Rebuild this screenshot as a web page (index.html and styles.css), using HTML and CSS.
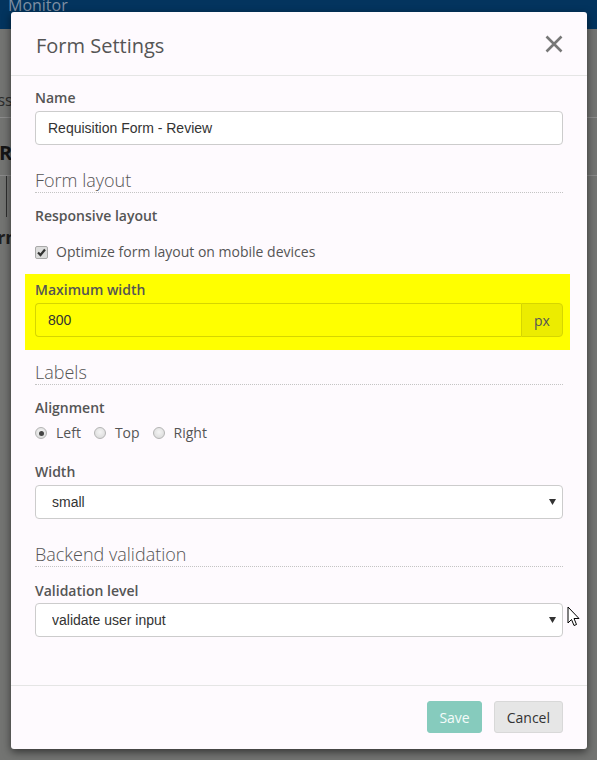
FILE: index.html
```html
<!DOCTYPE html>
<html lang="en">

<head>
    <meta charset="UTF-8" />
    <meta name="viewport" content="width=device-width, initial-scale=1.0" />
    <title>Form Settings</title>
    <link rel="stylesheet" href="styles.css">
</head>

<body>

    <div class="page">
        <div class="topbar"><span class="brand">Monitor</span></div>
        <div class="crumbs"><span>Process</span></div>
        <h2 class="page-title">Requisitions</h2>
        <div class="grid">
            <div class="grid-cell"></div>
        </div>
        <div class="grid-label">Return</div>
    </div>

    <div class="modal">
        <div class="modal-header">
            <h1 class="modal-title">Form Settings</h1>
            <button class="close" aria-label="Close">
                <svg width="18" height="18" viewBox="0 0 18 18">
                    <path d="M1.5 1.5 L16.5 16.5 M16.5 1.5 L1.5 16.5" stroke="#777" stroke-width="2.6" fill="none" />
                </svg>
            </button>
        </div>

        <div class="modal-body">
            <label class="field-label">Name</label>
            <input class="text-input" type="text" value="Requisition Form - Review">

            <h3 class="section-title">Form layout</h3>

            <label class="field-label after-title">Responsive layout</label>
            <label class="check-row">
                <span class="checkbox">
                    <svg width="11" height="11" viewBox="0 0 11 11">
                        <path d="M2 5.5 L4.5 8 L9 2.5" stroke="#333" stroke-width="2.2" fill="none" />
                    </svg>
                </span>
                Optimize form layout on mobile devices
            </label>

            <div class="highlight">
                <label class="field-label">Maximum width</label>
                <div class="input-group">
                    <input class="text-input" type="text" value="800">
                    <span class="addon">px</span>
                </div>
            </div>

            <h3 class="section-title after-highlight">Labels</h3>

            <label class="field-label after-title">Alignment</label>
            <div class="radio-row">
                <label class="radio"><span class="radio-dot checked"></span>Left</label>
                <label class="radio"><span class="radio-dot"></span>Top</label>
                <label class="radio"><span class="radio-dot"></span>Right</label>
            </div>

            <label class="field-label after-radios">Width</label>
            <div class="select">
                <select>
                    <option>small</option>
                    <option>medium</option>
                    <option>large</option>
                </select>
                <svg class="caret" width="7" height="6" viewBox="0 0 7 6">
                    <polygon points="0,0 7,0 3.5,6" fill="#333" />
                </svg>
            </div>

            <h3 class="section-title">Backend validation</h3>

            <label class="field-label after-title level">Validation level</label>
            <div class="select">
                <select>
                    <option>validate user input</option>
                    <option>none</option>
                </select>
                <svg class="caret" width="7" height="6" viewBox="0 0 7 6">
                    <polygon points="0,0 7,0 3.5,6" fill="#333" />
                </svg>
            </div>
        </div>

        <div class="modal-footer">
            <button class="btn btn-save" disabled>Save</button>
            <button class="btn btn-cancel">Cancel</button>
        </div>
    </div>

    <svg class="cursor" width="14" height="22" viewBox="0 0 14 22">
        <path d="M1 1 L1 17 L4.5 13.5 L7 19.5 L9.5 18.5 L7 12.5 L12 12.5 Z" fill="#fff" stroke="#000" stroke-width="1" />
    </svg>

</body>

</html>
```

FILE: styles.css
```css
* {
    box-sizing: border-box;
}

body {
    margin: 0;
    height: 760px;
    overflow: hidden;
    position: relative;
    font-family: "Open Sans", sans-serif;
    background: #737472;
}

/* dimmed page behind the dialog */
.topbar {
    height: 29px;
    background: #03345e;
    overflow: hidden;
    padding-left: 8px;
}

.brand {
    display: block;
    margin-top: -6px;
    font-size: 16px;
    line-height: 22px;
    color: #7f8fa3;
}

.crumbs {
    height: 89px;
    padding-top: 60px;
    border-bottom: 1px solid #8c8c8c;
    font-size: 16px;
    line-height: 22px;
    color: #2c2c2c;
    white-space: nowrap;
}

.crumbs span {
    margin-left: -45px;
}

.page-title {
    margin: 21px 0 0 -1px;
    font-size: 20px;
    line-height: 28px;
    color: #151515;
}

.grid {
    margin-top: 8px;
    height: 42px;
    border-top: 1px solid #8a8a8a;
}

.grid-cell {
    margin-left: 6px;
    height: 100%;
    border-left: 1px solid #2e2e2e;
}

.grid-label {
    margin: 8px 0 0 -45px;
    font-size: 18px;
    font-weight: 700;
    line-height: 24px;
    color: #1e1e1e;
}

/* dialog */
.modal {
    position: absolute;
    top: 12px;
    left: 11px;
    width: 576px;
    height: 737px;
    background: #fefafe;
    border-radius: 3px;
    box-shadow: 0 3px 9px rgba(0, 0, 0, 0.55);
    display: flex;
    flex-direction: column;
}

.modal-header {
    height: 64px;
    border-bottom: 1px solid #e5e5e5;
    display: flex;
    justify-content: space-between;
    align-items: flex-start;
    padding: 20px 24px 0 25px;
}

.modal-title {
    margin: 0;
    font-size: 20px;
    font-weight: 400;
    line-height: 28px;
    color: #555;
}

.close {
    margin-top: 3px;
    width: 18px;
    height: 18px;
    padding: 0;
    border: 0;
    background: none;
}

.modal-body {
    flex: 1;
    padding: 12px 24px 0;
}

.field-label {
    display: block;
    font-size: 14px;
    font-weight: 600;
    line-height: 19px;
    color: #555;
    margin-bottom: 4px;
}

.field-label.after-title {
    margin-top: 13px;
}

.field-label.level {
    margin-top: 14px;
    margin-bottom: 3px;
}

.field-label.after-radios {
    margin-top: 19px;
}

.text-input {
    display: block;
    width: 100%;
    height: 34px;
    border: 1px solid #ccc;
    border-radius: 4px;
    background: #fff;
    padding: 0 12px;
    font: 14px "Liberation Sans", Arial, sans-serif;
    color: #333;
}

.section-title {
    margin: 23px 0 0;
    font-size: 18px;
    font-weight: 300;
    line-height: 24px;
    color: #555;
    border-bottom: 1px dotted #c4c4c4;
}

.section-title.after-highlight {
    margin-top: 10px;
}

.check-row {
    display: flex;
    align-items: center;
    gap: 8px;
    margin-top: 17px;
    font-size: 14px;
    line-height: 20px;
    color: #555;
}

.checkbox {
    width: 13px;
    height: 13px;
    border: 1px solid #a9a9a9;
    border-radius: 2px;
    background: #dcdcdc;
    display: flex;
    align-items: center;
    justify-content: center;
}

.highlight {
    margin: 12px -7px 0 -10px;
    padding: 6px 7px 13px 10px;
    background: #ffff00;
}

.input-group {
    display: flex;
}

.input-group .text-input {
    flex: 1;
    background: transparent;
    border-color: #d6d600;
    border-radius: 4px 0 0 4px;
    border-right: 0;
}

.addon {
    width: 42px;
    height: 34px;
    border: 1px solid #d6d600;
    border-radius: 0 4px 4px 0;
    background: #ecec00;
    color: #555;
    font-size: 14px;
    display: flex;
    align-items: center;
    justify-content: center;
}

.radio-row {
    display: flex;
    gap: 13px;
    margin-top: 6px;
    font-size: 14px;
    line-height: 20px;
    color: #555;
}

.radio {
    display: flex;
    align-items: center;
    gap: 9px;
}

.radio-dot {
    width: 12px;
    height: 12px;
    border: 1px solid #b4b4b4;
    border-radius: 50%;
    background: radial-gradient(circle at 50% 40%, #f4f4f4, #d6d6d6);
    display: flex;
    align-items: center;
    justify-content: center;
}

.radio-dot.checked::after {
    content: "";
    width: 5px;
    height: 5px;
    border-radius: 50%;
    background: #444;
}

.select {
    position: relative;
}

.select select {
    appearance: none;
    display: block;
    width: 100%;
    height: 34px;
    border: 1px solid #ccc;
    border-radius: 4px;
    background: #fff;
    padding: 0 16px;
    font: 14px "Liberation Sans", Arial, sans-serif;
    color: #333;
}

.caret {
    position: absolute;
    right: 7px;
    top: 14px;
}

.modal-footer {
    border-top: 1px solid #e5e5e5;
    padding: 15px 24px 16px;
    display: flex;
    justify-content: flex-end;
    gap: 12px;
}

.btn {
    height: 32px;
    padding: 0 12px;
    border: 1px solid;
    border-radius: 3px;
    font-family: "Open Sans", sans-serif;
    font-size: 14px;
}

.btn-save {
    padding: 0 11px;
    background: #86cbbd;
    border-color: #86cbbd;
    color: #f4fbfa;
}

.btn-cancel {
    background: #e6e6e6;
    border-color: #d8d8d8;
    color: #333;
}

.cursor {
    position: absolute;
    left: 567px;
    top: 606px;
}
```
